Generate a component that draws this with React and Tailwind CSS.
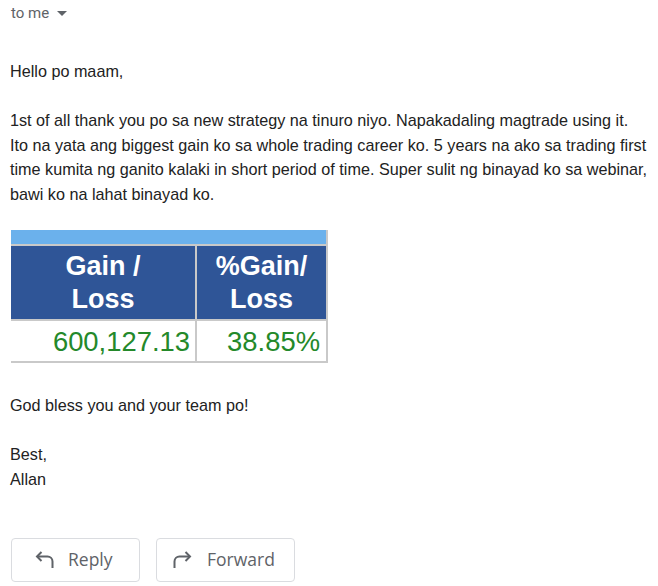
import React from "react";

function ReplyIcon({ flip }) {
  return (
    <svg
      width="20"
      height="18"
      viewBox="0 0 20 18"
      fill="none"
      stroke="#5f6368"
      strokeWidth="2"
      className={flip ? "-scale-x-100" : ""}
    >
      <path d="M6.5 1 L2 5.5 L6.5 10" />
      <path d="M2 5.5 H12.5 A5 5 0 0 1 17.5 10.5 V17" />
    </svg>
  );
}

export default function App() {
  const body = { fontFamily: '"Liberation Sans", Arial, sans-serif' };
  return (
    <div className="w-[658px] h-[586px] bg-white pl-[10px] overflow-hidden">
      <div
        className="h-[26px] flex items-center gap-[8px] pl-[1px] text-[15px] text-[#5f6368]"
        style={{ fontFamily: 'Roboto, "Liberation Sans", sans-serif' }}
      >
        <span>to me</span>
        <svg width="10" height="5" viewBox="0 0 10 5" className="mt-[1px]">
          <path d="M0 0 H10 L5 5 Z" fill="#5f6368" />
        </svg>
      </div>

      <div className="text-[16.2px] leading-[24.5px] text-[#222222]" style={body}>
        <div className="mt-[33px]">Hello po maam,</div>
        <div className="mt-[24.5px]">
          1st of all thank you po sa new strategy na tinuro niyo. Napakadaling magtrade using it.
          <br />
          Ito na yata ang biggest gain ko sa whole trading career ko. 5 years na ako sa trading first
          <br />
          time kumita ng ganito kalaki in short period of time. Super sulit ng binayad ko sa webinar,
          <br />
          bawi ko na lahat binayad ko.
        </div>

        <div className="mt-[24px] ml-[1px] w-[317px] border-r-2 border-b-2 border-[#c9c9c9]">
          <div className="h-[16px] bg-[#6bb1ec] border-b-2 border-[#c9c9c9]" />
          <div className="flex h-[75px] border-b-2 border-[#c9c9c9] bg-[#2f5597] text-white font-bold text-[27px] leading-[33px] text-center">
            <div className="w-[186px] border-r-2 border-[#c9c9c9] flex flex-col items-center justify-center">
              <div>Gain /</div>
              <div>Loss</div>
            </div>
            <div className="flex-1 flex flex-col items-center justify-center">
              <div>%Gain/</div>
              <div>Loss</div>
            </div>
          </div>
          <div className="flex h-[40px] text-[27.4px] leading-[33px] text-[#24892a] bg-white">
            <div className="w-[186px] border-r-2 border-[#c9c9c9] flex items-center justify-end pr-[5px]">
              600,127.13
            </div>
            <div className="flex-1 flex items-center justify-end pr-[6px]">38.85%</div>
          </div>
        </div>

        <div className="mt-[30px]">God bless you and your team po!</div>
        <div className="mt-[24.5px]">Best,</div>
        <div>Allan</div>
      </div>

      <div
        className="mt-[47px] ml-[1px] flex gap-[16px] text-[17.5px] font-medium text-[#5f6368]"
        style={{ fontFamily: '"Open Sans", Roboto, sans-serif' }}
      >
        <button className="w-[129px] h-[44px] border border-[#dadce0] rounded-[4px] flex items-center pl-[23px] bg-white">
          <ReplyIcon />
          <span className="ml-[13px] -mt-[1px]">Reply</span>
        </button>
        <button className="w-[139px] h-[44px] border border-[#dadce0] rounded-[4px] flex items-center pl-[15px] bg-white">
          <ReplyIcon flip />
          <span className="ml-[15px] -mt-[1px]">Forward</span>
        </button>
      </div>
    </div>
  );
}
